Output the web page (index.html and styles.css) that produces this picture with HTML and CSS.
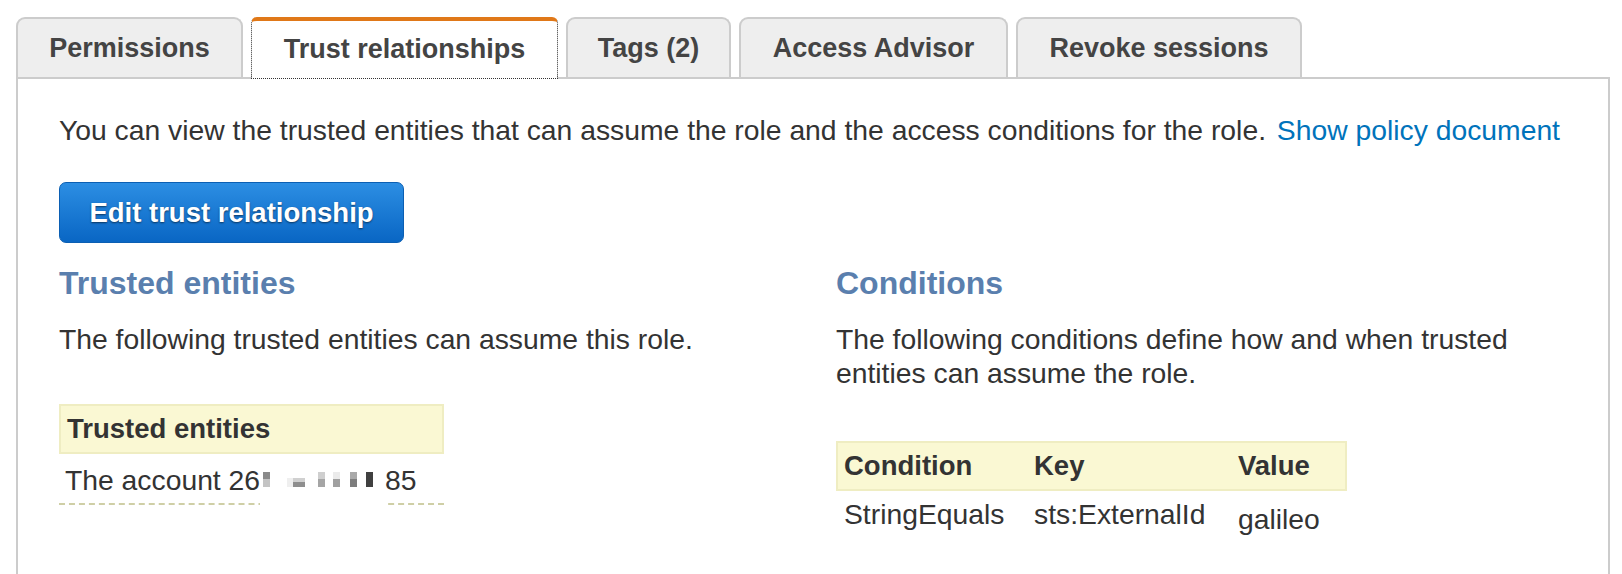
FILE: index.html
```html
<!DOCTYPE html>
<html lang="en">
<head>
<meta charset="utf-8">
<title>Trust relationships</title>
<link rel="stylesheet" href="styles.css">
</head>
<body>
<div class="tabs">
  <div class="tab tab-perm">Permissions</div>
  <div class="tab tab-active">Trust relationships</div>
  <div class="tab tab-tags">Tags (2)</div>
  <div class="tab tab-advisor">Access Advisor</div>
  <div class="tab tab-revoke">Revoke sessions</div>
</div>
<div class="panel">
  <p class="intro">You can view the trusted entities that can assume the role and the access conditions for the role. <a class="link" href="#">Show policy document</a></p>
  <button class="btn" type="button">Edit trust relationship</button>
  <div class="columns">
    <section class="col">
      <h2 class="heading">Trusted entities</h2>
      <p class="para">The following trusted entities can assume this role.</p>
      <div class="table table-left">
        <div class="thead"><div class="cell">Trusted entities</div></div>
        <div class="trow trow-dashed"><div class="cell">The account 26<span class="redact"><svg class="redact-svg" width="125" height="46" viewBox="0 0 125 46"><rect x="0" y="0" width="125" height="46" fill="#fff"/><rect x="3" y="10" width="7" height="7" fill="#8a8a8a"/><rect x="3" y="17" width="7" height="8" fill="#c4c4c4"/><rect x="27" y="16" width="6" height="9" fill="#efefef"/><rect x="33" y="16" width="12" height="4" fill="#d0d0d0"/><rect x="33" y="20" width="12" height="5" fill="#8e8e8e"/><rect x="58" y="10" width="7" height="7" fill="#cfcfcf"/><rect x="58" y="17" width="7" height="8" fill="#a5a5a5"/><rect x="73" y="10" width="7" height="7" fill="#ebebeb"/><rect x="73" y="17" width="7" height="8" fill="#a0a0a0"/><rect x="90" y="10" width="7" height="7" fill="#a9a9a9"/><rect x="90" y="17" width="7" height="8" fill="#7d7d7d"/><rect x="106" y="10" width="7" height="15" fill="#404040"/></svg></span>85</div></div>
      </div>
    </section>
    <section class="col">
      <h2 class="heading">Conditions</h2>
      <p class="para">The following conditions define how and when trusted entities can assume the role.</p>
      <div class="table table-right">
        <div class="thead thead-grid">
          <div class="cell">Condition</div>
          <div class="cell">Key</div>
          <div class="cell">Value</div>
        </div>
        <div class="trow trow-grid">
          <div class="cell">StringEquals</div>
          <div class="cell">sts:ExternalId</div>
          <div class="cell cell-low">galileo</div>
        </div>
      </div>
    </section>
  </div>
</div>
</body>
</html>
```

FILE: styles.css
```css
html, body {
  margin: 0;
  padding: 0;
  background: #ffffff;
  overflow: hidden;
}

body {
  font-family: "Liberation Sans", Arial, Helvetica, sans-serif;
  color: #333333;
}

.tabs {
  display: flex;
  align-items: flex-end;
  gap: 8px;
  padding: 17px 0 0 16px;
}

.tab {
  box-sizing: border-box;
  height: 60px;
  padding: 0;
  display: flex;
  align-items: center;
  justify-content: center;
  background: #eeeeee;
  border: 2px solid #cccccc;
  border-bottom: 0;
  border-radius: 9px 9px 0 0;
  font-size: 27px;
  font-weight: bold;
  color: #444444;
  white-space: nowrap;
}

.tab-perm { width: 227px; }
.tab-active { width: 307px; }
.tab-tags { width: 165px; }
.tab-advisor { width: 269px; }
.tab-revoke { width: 286px; }

.tab-active {
  position: relative;
  z-index: 1;
  height: 62px;
  margin-bottom: -2px;
  background: #ffffff;
  border-top: 4px solid #e07818;
  border-left: 1px dotted #333333;
  border-right: 1px dotted #333333;
  border-bottom: 1px dotted #333333;
  border-radius: 6px 6px 0 0;
}

.panel {
  margin: 0 12px 0 16px;
  min-height: 560px;
  border: 2px solid #cccccc;
  border-bottom: 0;
  padding: 33px 40px 0 41px;
}

.intro {
  margin: 0;
  font-size: 28.3px;
  line-height: 36px;
  white-space: nowrap;
}

.link {
  margin-left: 3px;
  color: #0073bb;
  text-decoration: none;
}

.btn {
  display: flex;
  align-items: center;
  justify-content: center;
  box-sizing: border-box;
  width: 345px;
  height: 61px;
  margin-top: 34px;
  padding: 0;
  border: 1px solid #0b5fb3;
  border-radius: 7px;
  background: linear-gradient(#2c8ee3, #0966c4);
  color: #ffffff;
  font-family: "Liberation Sans", Arial, Helvetica, sans-serif;
  font-size: 27.5px;
  font-weight: bold;
  text-shadow: 0 1px 2px rgba(0, 0, 0, 0.55);
}

.columns {
  display: grid;
  grid-template-columns: 777px 1fr;
  margin-top: 22px;
}

.heading {
  margin: 0;
  font-size: 32px;
  line-height: 36px;
  font-weight: bold;
  color: #5a7fae;
}

.para {
  margin: 21px 0 0;
  font-size: 28.3px;
  line-height: 34px;
}

.table {
  font-size: 28.3px;
}

.table-left {
  width: 385px;
  margin-top: 48px;
}

.table-right {
  width: 511px;
  margin-top: 51px;
}

.thead {
  box-sizing: border-box;
  height: 50px;
  background: #faf8d3;
  border: 2px solid #efedc2;
  font-weight: bold;
  font-size: 27.5px;
  line-height: 46px;
}

.thead-grid,
.trow-grid {
  display: grid;
  grid-template-columns: 190px 204px 1fr;
}

.trow-grid {
  padding: 0 2px;
}

.cell {
  padding: 0 6px;
  white-space: nowrap;
}

.trow {
  line-height: 34px;
}

.trow-dashed .cell {
  padding-top: 8px;
  padding-bottom: 6px;
  border-bottom: 2px dashed #cfcfa6;
}

.trow-grid .cell {
  padding-top: 6px;
}

.trow-grid .cell-low {
  padding-top: 11px;
}

.redact {
  position: relative;
  display: inline-block;
  width: 125px;
  height: 1em;
}

.redact-svg {
  position: absolute;
  left: 0;
  top: 0;
}
```
